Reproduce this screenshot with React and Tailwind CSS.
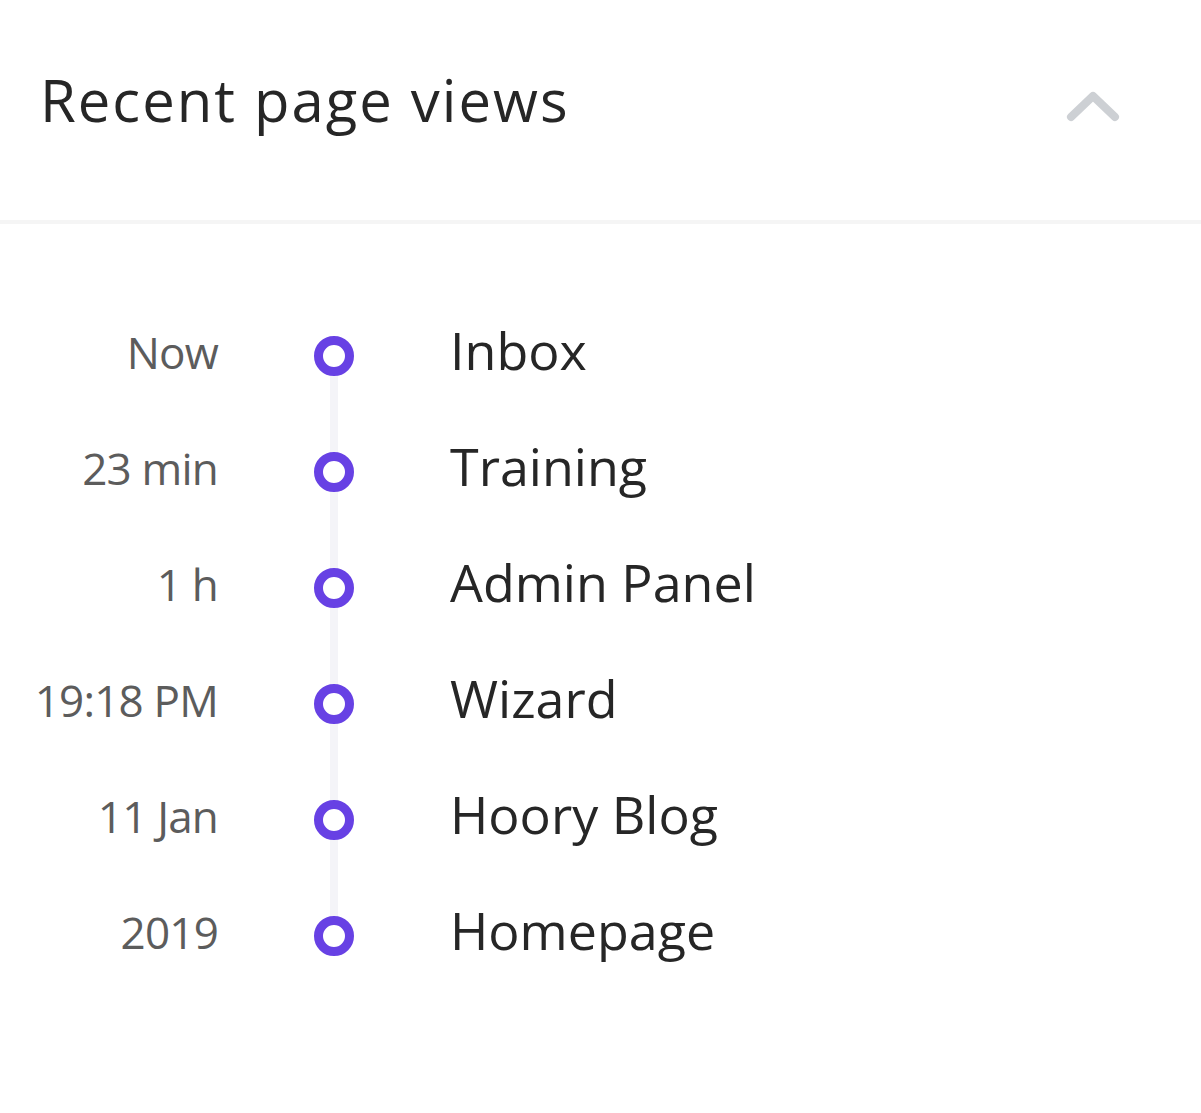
import React from "react";

const items = [
  ["Now", "Inbox"],
  ["23 min", "Training"],
  ["1 h", "Admin Panel"],
  ["19:18 PM", "Wizard"],
  ["11 Jan", "Hoory Blog"],
  ["2019", "Homepage"],
];

export default function App() {
  return (
    <div className="w-[1201px] h-[1113px] bg-white" style={{ fontFamily: '"Open Sans", "Noto Sans", sans-serif' }}>
      <div className="h-[220px] flex items-start justify-between pl-[40px] pr-[78px] pt-[64px]">
        <h1 className="text-[58px] leading-[72px] text-[#262626] font-normal tracking-[2px]">Recent page views</h1>
        <svg className="mt-[22px]" width="60" height="40" viewBox="0 0 60 40" fill="none">
          <path d="M8 31 L30 10 L52 31" stroke="#cdd0d4" strokeWidth="8" strokeLinecap="round" strokeLinejoin="round" />
        </svg>
      </div>
      <div className="h-[4px] bg-[#f5f5f5]" />
      <div className="pt-[74px]">
        {items.map(([t, l], i) => (
          <div key={i} className="flex h-[116px]">
            <div className="w-[218px] flex items-center justify-end text-[44px] tracking-[-0.8px] text-[#5c5c5c] pb-[8px]">{t}</div>
            <div className="w-[232px] flex flex-col items-center">
              <div className={"w-[8px] flex-1 " + (i === 0 ? "bg-transparent" : "bg-[#f4f4f8]")} />
              <div className="w-[40px] h-[40px] rounded-full border-[9px] border-[#6741e4] bg-white shrink-0" />
              <div className={"w-[8px] flex-1 " + (i === items.length - 1 ? "bg-transparent" : "bg-[#f4f4f8]")} />
            </div>
            <div className="flex-1 flex items-center text-[52px] text-[#262626] pb-[12px]">{l}</div>
          </div>
        ))}
      </div>
    </div>
  );
}
